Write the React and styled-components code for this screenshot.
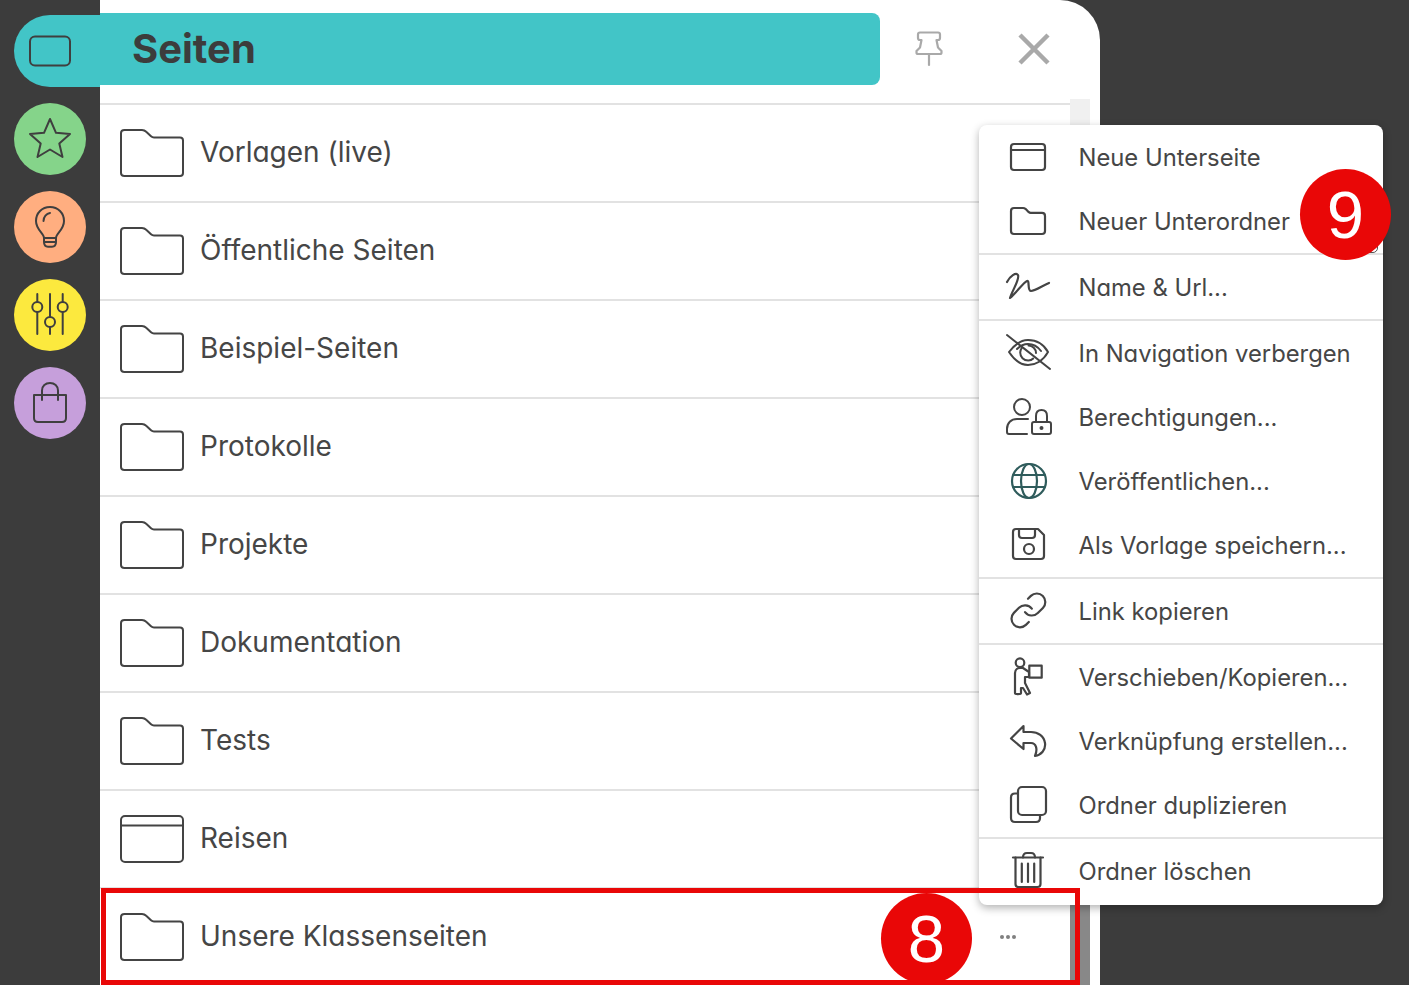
import React from "react";
import styled, { createGlobalStyle } from "styled-components";

const Global = createGlobalStyle`
	html, body {
		margin: 0;
		padding: 0;
		height: 985px;
		overflow: hidden;
		background: #3c3c3c;
		font-family: "Inter", "Liberation Sans", sans-serif;
		font-feature-settings: "cv11";
	}
	* {
		box-sizing: border-box;
	}
`;

const Page = styled.div`
	display: flex;
	width: 1409px;
	height: 985px;
	position: relative;
	overflow: hidden;
	background: #3c3c3c;
`;

const Sidebar = styled.nav`
	width: 100px;
	flex: none;
	padding: 15px 0 0 14px;
	display: flex;
	flex-direction: column;
	gap: 16px;
`;

const NavCircle = styled.div`
	width: ${({ $active }) => ($active ? "86px" : "72px")};
	height: 72px;
	border-radius: ${({ $active }) => ($active ? "36px 0 0 36px" : "50%")};
	background: ${({ $color }) => $color};
	display: flex;
	align-items: center;
	color: #3f3f3f;
	svg {
		display: block;
		margin-left: 7px;
	}
`;

const Panel = styled.main`
	width: 1000px;
	flex: none;
	height: 985px;
	background: #fff;
	border-top-right-radius: 40px;
	display: flex;
	flex-direction: column;
	overflow: hidden;
`;

const Header = styled.header`
	height: 99px;
	flex: none;
	display: flex;
	align-items: flex-start;
	padding-top: 13px;
`;

const TitleBar = styled.div`
	width: 780px;
	height: 72px;
	background: #42c5c7;
	border-radius: 0 8px 8px 0;
	display: flex;
	align-items: center;
	padding-left: 32px;
`;

const Title = styled.h1`
	margin: -2px 0 0;
	font-size: 40px;
	font-weight: 700;
	color: #3c3c3c;
`;

const HeaderButton = styled.button`
	border: 0;
	background: none;
	padding: 0;
	width: 48px;
	height: 48px;
	color: #a9a9a9;
	margin: 12px 0 0 ${({ $gap }) => $gap}px;
	svg {
		display: block;
	}
`;

const Body = styled.div`
	flex: 1;
	display: flex;
	min-height: 0;
	padding-right: 10px;
`;

const List = styled.ul`
	flex: 1;
	list-style: none;
	margin: 0;
	padding: 4px 0 0;
`;

const Row = styled.li`
	height: 98px;
	border-top: 2px solid #e2e2e2;
	display: flex;
	align-items: center;
	padding: 0 54px 2px 20px;
	color: #444;
	svg {
		flex: none;
		display: block;
		margin-top: 2px;
	}
`;

const RowLabel = styled.span`
	margin-left: 16px;
	font-size: 28px;
	font-weight: 400;
	color: #464646;
`;

const Dots = styled.span`
	margin-left: auto;
	display: flex;
	gap: 2px;
	margin-top: 2px;
	i {
		width: 4px;
		height: 4px;
		border-radius: 50%;
		background: #808080;
	}
`;

const Scrollbar = styled.div`
	width: 20px;
	flex: none;
	background: #f0f0f0;
	display: flex;
	flex-direction: column;
	justify-content: flex-end;
`;

const Thumb = styled.div`
	height: 300px;
	background: #888;
`;

const Menu = styled.div`
	position: absolute;
	left: 979px;
	top: 125px;
	width: 404px;
	height: 780px;
	background: #fff;
	border-radius: 8px;
	box-shadow: 0 3px 8px rgba(0, 0, 0, 0.3);
`;

const MenuRow = styled.div`
	height: 64px;
	display: flex;
	align-items: center;
	color: #444;
	position: relative;
`;

const MenuDivider = styled.div`
	height: 2px;
	background: #e2e2e2;
`;

const MenuIcon = styled.span`
	width: 99.5px;
	flex: none;
	display: flex;
	justify-content: center;
	color: ${({ $color }) => $color || "#444"};
	svg {
		display: block;
	}
`;

const MenuText = styled.span`
	font-size: 23.8px;
	line-height: 30px;
	margin-top: 2px;
	color: #464646;
`;

const HiddenHelp = styled.span`
	position: absolute;
	right: 5px;
	bottom: 0;
	width: 16px;
	height: 16px;
	border-radius: 5px;
	border: 1.5px solid #555;
`;

const Highlight = styled.div`
	position: absolute;
	left: 101px;
	top: 888px;
	width: 979px;
	height: 97px;
	border: 5px solid #e90707;
`;

const Badge = styled.div`
	position: absolute;
	left: ${({ $x }) => $x}px;
	top: ${({ $y }) => $y}px;
	width: 91px;
	height: 91px;
	border-radius: 50%;
	background: #e90707;
	color: #fff;
	font-family: "Liberation Sans", sans-serif;
	font-size: 67px;
	line-height: 91px;
	text-align: center;
`;

const Svg = ({ w = 48, h = 48, sw = 2, children }) => (
	<svg
		width={w}
		height={h}
		viewBox={`0 0 ${w} ${h}`}
		fill="none"
		stroke="currentColor"
		strokeWidth={sw}
		strokeLinecap="round"
		strokeLinejoin="round"
	>
		{children}
	</svg>
);

const FolderBig = () => (
	<Svg w={64} h={48}>
		<path d="M4.500 1H22c2 0 3 .6 4.200 1.800L31 7.200c1 .9 1.800 1.200 3 1.200h26c1.900 0 3 1.200 3 3V44c0 2-1.200 3-3 3H4.500c-2 0-3.500-1-3.500-3V4c0-2 1.500-3 3.500-3z" />
	</Svg>
);

const PageBig = () => (
	<Svg w={64} h={48}>
		<rect x="1" y="1" width="62" height="46" rx="4" />
		<path d="M1 10.500h62" />
	</Svg>
);

const StarIcon = () => (
	<Svg w={58} h={58}>
		<path d="M29 9l6 13.800 14 1.200-10.700 9.500L41.500 47 29 39.500 16.500 47l3.200-13.500L9 24l14-1.200z" />
	</Svg>
);

const BulbIcon = () => (
	<Svg w={58} h={58}>
		<path d="M23 40c0-5-8-8-8-17 0-8 6-14 14-14s14 6 14 14c0 9-8 12-8 17z" />
		<path d="M23 40v4c0 3 1.500 4.700 4 4.700h4c2.500 0 4-1.700 4-4.700v-4M23 44h12" />
		<path d="M22.500 23c0-4 3-7.500 6.500-8" />
	</Svg>
);

const SlidersIcon = () => (
	<Svg w={58} h={58}>
		<path d="M16.300 8v8M16.300 26v22M29 8v23M29 41v7M41.700 8v8M41.700 26v22" />
		<circle cx="16.300" cy="21" r="5" />
		<circle cx="29" cy="36" r="5" />
		<circle cx="41.700" cy="21" r="5" />
	</Svg>
);

const BagIcon = () => (
	<Svg w={58} h={58}>
		<path d="M13 21h32v23c0 2.500-1.500 4-4 4H17c-2.500 0-4-1.500-4-4z" />
		<path d="M21 26V16.500C21 12 24.500 9 29 9s8 3 8 7.500V26" />
	</Svg>
);

const PinIcon = () => (
	<Svg sw={2.200}>
		<path d="M15 7.500h18c1.200 0 2 .8 2 2v3.500c0 1.200-.8 2-2 2h-1.500l1.500 7.500 3.500 3.500v1.500c0 .8-.5 1.500-1.500 1.500H13c-1 0-1.500-.7-1.500-1.500V26l3.500-3.500 1.500-7.500H15c-1.200 0-2-.8-2-2V9.500c0-1.200.8-2 2-2z" />
		<path d="M24 29.500V40" />
	</Svg>
);

const CloseIcon = () => (
	<Svg sw={4.500}>
		<path d="M10 10l28 28M38 10L10 38" strokeLinecap="butt" />
	</Svg>
);

const PageSmall = () => (
	<Svg sw={2.200}>
		<rect x="6" y="11" width="34" height="26" rx="3" />
		<path d="M6 17h34" />
	</Svg>
);

const FolderSmall = () => (
	<Svg sw={2.200}>
		<path d="M9 11h9c1.500 0 2 .5 3 1.300l2.500 2.600c.8.700 1.300 1 2.200 1H37c2 0 3 1 3 3V34c0 2-1 3-3 3H9c-2 0-3-1-3-3V14c0-2 1-3 3-3z" />
	</Svg>
);

const ScribbleIcon = () => (
	<Svg sw={2.200}>
		<path d="M2 19C5 13 11 9 13 12 15 16 7 28 5 35c6-5 14-16 17-17 3-1 0 10 4 10 4 0 11-5 18-8" />
	</Svg>
);

const EyeOffIcon = () => (
	<Svg>
		<path d="M2 6l43 34" />
		<path d="M4 23c7-9 13-12 19-12 7 0 15 3 20 12-5 9-13 13-20 13-6 0-13-4-19-13z" />
		<path d="M12 20c3-3 7-5 11-5 6 0 10 3 13 7" />
		<path d="M17 18.500c-1 1.500-1.800 3-1.800 5 0 4.500 3.500 8 8 8 2 0 3.800-.7 5-2M31 24c0-4-3.500-7.500-7.500-7.500" />
	</Svg>
);

const UserLockIcon = () => (
	<Svg>
		<circle cx="17" cy="14" r="8" />
		<path d="M23 26H12C6 26 2 30 2 36v3c0 1.500.8 2 2 2h18" />
		<rect x="27" y="29" width="19" height="12" rx="2" />
		<path d="M31 29v-6c0-3.500 2-6 5.500-6s5.500 2.500 5.500 6v6" />
		<circle cx="36.500" cy="35" r="1" fill="currentColor" />
	</Svg>
);

const GlobeIcon = () => (
	<Svg sw={2.200}>
		<circle cx="24" cy="24" r="17" />
		<ellipse cx="24" cy="24" rx="8" ry="17" />
		<path d="M8.500 18h31M8.500 30h31" />
	</Svg>
);

const SaveIcon = () => (
	<Svg sw={2.200}>
		<path d="M11 8h22l6 6v21c0 2-1 3-3 3H11c-2 0-3-1-3-3V11c0-2 1-3 3-3z" />
		<path d="M14 8v6c0 2 1 3 3 3h10c2 0 3-1 3-3V8" />
		<circle cx="24" cy="28" r="5" />
	</Svg>
);

const LinkIcon = () => (
	<Svg sw={1.300}>
		<g transform="translate(3 3) scale(1.700)">
			<path d="M10 13a5 5 0 0 0 7.540.54l3-3a5 5 0 0 0-7.070-7.070l-1.720 1.710" />
			<path d="M14 11a5 5 0 0 0-7.540-.54l-3 3a5 5 0 0 0 7.070 7.070l1.710-1.710" />
		</g>
	</Svg>
);

const MoverIcon = () => (
	<Svg sw={2.200}>
		<circle cx="15" cy="9.700" r="4.300" />
		<path d="M24.300 12.700h12.400v12H24.300z" />
		<path d="M18 15l6 4v5h-4v6l5 10-3 1.500-4-6.500h-2v5c0 1.500-6 1.500-6 0V20c0-3.500 3-5 5-5z" />
	</Svg>
);

const ReplyIcon = () => (
	<Svg sw={2.200}>
		<path d="M18.500 9L6 21.500 18.500 32v-6H26c5 0 7 6 4 13 6-1 11-6 10-13-1-7-7-11-14-11h-7.500z" />
	</Svg>
);

const CopyIcon = () => (
	<Svg sw={2.200}>
		<rect x="13" y="6" width="28" height="28" rx="4" />
		<path d="M13 12.500h-3c-2.500 0-4 1.500-4 4V37c0 2.500 1.500 4 4 4h21c2.500 0 4-1.500 4-4v-3" />
	</Svg>
);

const TrashIcon = () => (
	<Svg sw={2.200}>
		<path d="M8 10.500h30" />
		<path d="M18 10.500c0-3 1.500-4.500 4-4.500h4c2.500 0 4 1.500 4 4.500" />
		<path d="M10.500 10.500V37c0 2 1 3 3 3h19c2 0 3-1 3-3V10.500" />
		<path d="M16.800 16.500V35M23 16.500V35M29.200 16.500V35" />
	</Svg>
);

const rows = [
	{ label: "Vorlagen (live)" },
	{ label: "Öffentliche Seiten" },
	{ label: "Beispiel-Seiten" },
	{ label: "Protokolle" },
	{ label: "Projekte" },
	{ label: "Dokumentation" },
	{ label: "Tests" },
	{ label: "Reisen", page: true },
	{ label: "Unsere Klassenseiten", dots: true },
];

const menuGroups = [
	[
		{ label: "Neue Unterseite", icon: <PageSmall /> },
		{ label: "Neuer Unterordner", icon: <FolderSmall />, help: true },
	],
	[{ label: "Name & Url...", icon: <ScribbleIcon /> }],
	[
		{ label: "In Navigation verbergen", icon: <EyeOffIcon /> },
		{ label: "Berechtigungen...", icon: <UserLockIcon /> },
		{ label: "Veröffentlichen...", icon: <GlobeIcon />, color: "#2f5c5c" },
		{ label: "Als Vorlage speichern...", icon: <SaveIcon /> },
	],
	[{ label: "Link kopieren", icon: <LinkIcon /> }],
	[
		{ label: "Verschieben/Kopieren...", icon: <MoverIcon /> },
		{ label: "Verknüpfung erstellen...", icon: <ReplyIcon /> },
		{ label: "Ordner duplizieren", icon: <CopyIcon /> },
	],
	[{ label: "Ordner löschen", icon: <TrashIcon /> }],
];

const App = () => {
	return (
		<Page>
			<Global />
			<Sidebar>
				<NavCircle $active $color="#42c5c7">
					<svg width="58" height="58" viewBox="0 0 58 58" fill="none" stroke="currentColor" strokeWidth="2">
						<rect x="9" y="14.500" width="40" height="29" rx="5" />
					</svg>
				</NavCircle>
				<NavCircle $color="#85d48a">
					<StarIcon />
				</NavCircle>
				<NavCircle $color="#ffae80">
					<BulbIcon />
				</NavCircle>
				<NavCircle $color="#fce93e">
					<SlidersIcon />
				</NavCircle>
				<NavCircle $color="#c69fdb">
					<BagIcon />
				</NavCircle>
			</Sidebar>
			<Panel>
				<Header>
					<TitleBar>
						<Title>Seiten</Title>
					</TitleBar>
					<HeaderButton $gap={25}>
						<PinIcon />
					</HeaderButton>
					<HeaderButton $gap={57}>
						<CloseIcon />
					</HeaderButton>
				</Header>
				<Body>
					<List>
						{rows.map((row) => (
							<Row key={row.label}>
								{row.page ? <PageBig /> : <FolderBig />}
								<RowLabel>{row.label}</RowLabel>
								{row.dots && (
									<Dots>
										<i />
										<i />
										<i />
									</Dots>
								)}
							</Row>
						))}
					</List>
					<Scrollbar>
						<Thumb />
					</Scrollbar>
				</Body>
			</Panel>
			<Menu>
				{menuGroups.map((group, index) => (
					<React.Fragment key={index}>
						{index > 0 && <MenuDivider />}
						{group.map((item) => (
							<MenuRow key={item.label}>
								<MenuIcon $color={item.color}>{item.icon}</MenuIcon>
								<MenuText>{item.label}</MenuText>
								{item.help && <HiddenHelp />}
							</MenuRow>
						))}
					</React.Fragment>
				))}
			</Menu>
			<Highlight />
			<Badge $x={881} $y={893}>8</Badge>
			<Badge $x={1300} $y={169}>9</Badge>
		</Page>
	);
};

export default App;
